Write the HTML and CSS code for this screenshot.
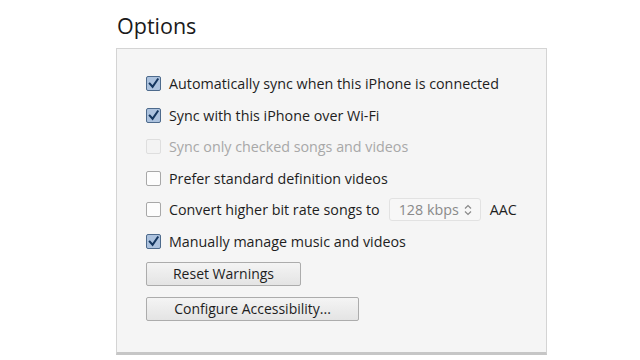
FILE: index.html
```html
<!DOCTYPE html>
<html>
<head>
<meta charset="utf-8">
<link rel="stylesheet" href="styles.css">
</head>
<body>
<div class="page">
  <h1 class="title">Options</h1>
  <div class="panel">
    <div class="row"><span class="cb checked"><svg viewBox="0 0 14 14"><path d="M3 7.2 L6 10.5 L11.5 2.5" /></svg></span><span class="label">Automatically sync when this iPhone is connected</span></div>
    <div class="row"><span class="cb checked"><svg viewBox="0 0 14 14"><path d="M3 7.2 L6 10.5 L11.5 2.5" /></svg></span><span class="label">Sync with this iPhone over Wi-Fi</span></div>
    <div class="row disabled"><span class="cb"></span><span class="label">Sync only checked songs and videos</span></div>
    <div class="row"><span class="cb"></span><span class="label">Prefer standard definition videos</span></div>
    <div class="row"><span class="cb"></span><span class="label">Convert higher bit rate songs to</span>
      <span class="select"><span class="sel-text">128 kbps</span><svg class="chev" viewBox="0 0 10 14"><path d="M2 5.5 L5 2.5 L8 5.5 M2 8.5 L5 11.5 L8 8.5" /></svg></span>
      <span class="label aac">AAC</span></div>
    <div class="row"><span class="cb checked"><svg viewBox="0 0 14 14"><path d="M3 7.2 L6 10.5 L11.5 2.5" /></svg></span><span class="label">Manually manage music and videos</span></div>
    <div class="buttons">
      <button class="btn btn-reset">Reset Warnings</button>
      <button class="btn btn-access">Configure Accessibility...</button>
    </div>
  </div>
</div>
</body>
</html>
```
FILE: styles.css
```css
html, body {
  margin: 0;
  padding: 0;
  background: #ffffff;
}
body {
  font-family: "Open Sans", "Noto Sans", sans-serif;
  color: #1e1e1e;
  width: 640px;
  height: 360px;
  overflow: hidden;
}
.page {
  padding-left: 116px;
}
.title {
  margin: 0;
  height: 48px;
  box-sizing: border-box;
  padding-top: 11px;
  padding-left: 1px;
  font-size: 21.5px;
  font-weight: 400;
  line-height: 30px;
  color: #1a1a1a;
}
.panel {
  width: 431px;
  height: 307px;
  box-sizing: border-box;
  background: #f5f5f5;
  border: 1px solid #d4d4d4;
  border-bottom: 3px solid #c6c6c6;
  padding: 19px 0 0 29px;
  display: flex;
  flex-direction: column;
}
.row {
  height: 31.5px;
  display: flex;
  align-items: center;
  font-size: 14.3px;
}
.cb {
  width: 13px;
  height: 13px;
  border: 1px solid #a8a8a8;
  background: #fdfdfd;
  border-radius: 2px;
  margin-right: 8px;
  flex: none;
  display: flex;
  align-items: center;
  justify-content: center;
}
.cb.checked {
  background: #acc2de;
  border-color: #4d6a8c;
}
.cb svg {
  width: 13px;
  height: 13px;
}
.cb svg path {
  fill: none;
  stroke: #14365f;
  stroke-width: 2.2;
  stroke-linecap: square;
}
.disabled .cb {
  border-color: #dedede;
  background: #f3f3f3;
}
.disabled .label {
  color: #a8a8a8;
}
.select {
  margin-left: 9px;
  width: 92px;
  height: 23px;
  box-sizing: border-box;
  border: 1px solid #e2e2e2;
  border-radius: 3px;
  background: #f7f7f7;
  display: flex;
  align-items: center;
  padding-left: 9px;
  position: relative;
}
.sel-text {
  color: #8a8a8a;
  font-size: 14.3px;
}
.chev {
  width: 10px;
  height: 14px;
  position: absolute;
  right: 7px;
  top: 4px;
}
.chev path {
  fill: none;
  stroke: #8a8a8a;
  stroke-width: 1.2;
}
.aac {
  margin-left: 9px;
}
.buttons {
  display: flex;
  flex-direction: column;
  align-items: flex-start;
  gap: 11px;
  margin-top: 5px;
}
.btn {
  font-family: "Open Sans", "Noto Sans", sans-serif;
  font-size: 14px;
  color: #1e1e1e;
  height: 24px;
  box-sizing: border-box;
  border: 1px solid #acacac;
  border-radius: 2px;
  background: linear-gradient(#f4f4f4, #e4e4e4);
  padding: 0;
  line-height: 20px;
  margin: 0;
}
.btn-reset {
  width: 155px;
}
.btn-access {
  width: 213px;
}
```
